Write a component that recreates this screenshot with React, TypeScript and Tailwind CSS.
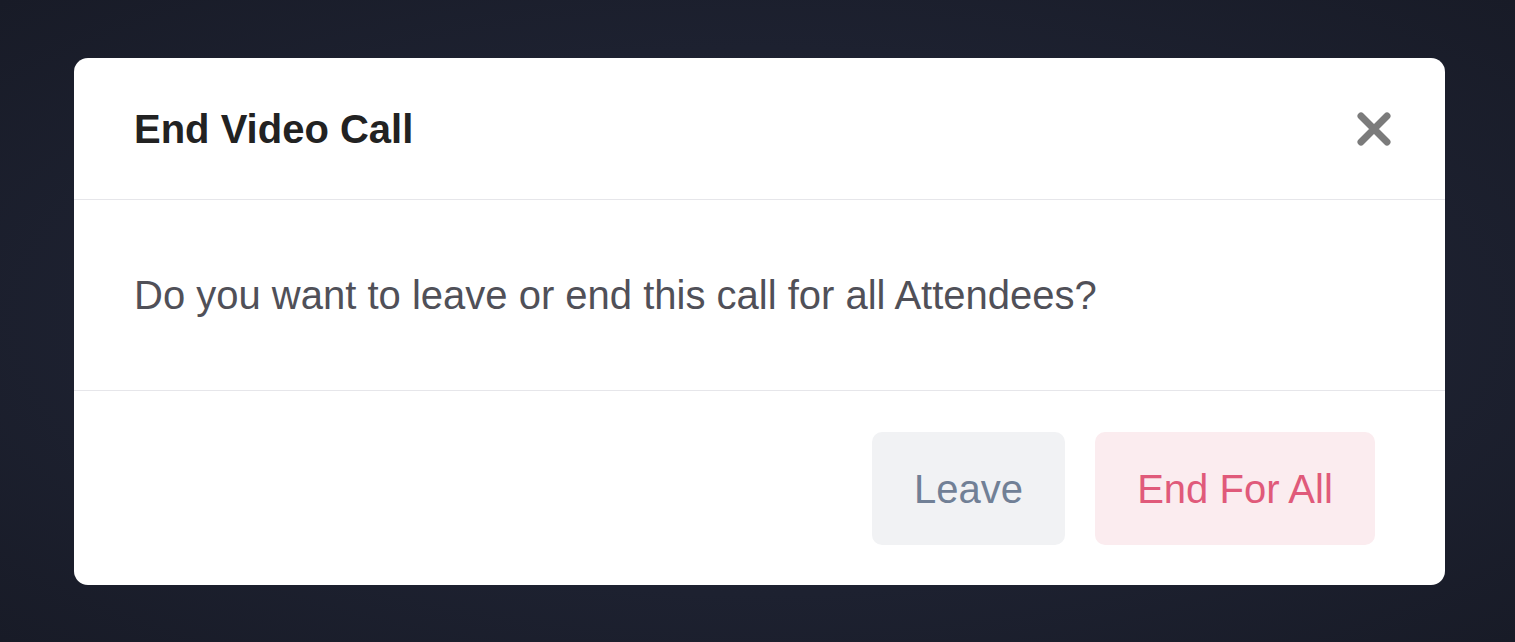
export default function App() {
  return (
    <div
      className="h-[642px] w-full overflow-hidden bg-[radial-gradient(ellipse_at_center,#262b3c_0%,#1d2130_60%,#181b27_100%)] pl-[74px] pt-[58px]"
      style={{ fontFamily: '"Liberation Sans", Arial, sans-serif' }}
    >
      <div className="w-[1371px] rounded-[14px] bg-white">
        <div className="flex h-[142px] items-center justify-between border-b border-[#e6e6ea] pl-[60px] pr-[54px]">
          <h2 className="text-[40px] font-bold text-[#222222]">End Video Call</h2>
          <button className="flex h-[34px] w-[34px] items-center justify-center">
            <svg width="34" height="34" viewBox="0 0 34 34">
              <path
                d="M4 4 L30 30 M30 4 L4 30"
                stroke="#7b7b7b"
                strokeWidth="7"
                strokeLinecap="round"
              />
            </svg>
          </button>
        </div>

        <div className="flex h-[191px] items-center border-b border-[#e6e6ea] pl-[60px]">
          <p className="text-[40px] text-[#505058]">
            Do you want to leave or end this call for all Attendees?
          </p>
        </div>

        <div className="flex justify-end gap-[30px] pb-[40px] pr-[70px] pt-[41px]">
          <button className="flex h-[113px] w-[193px] items-center justify-center rounded-[10px] bg-[#f1f2f4] text-[40px] text-[#718096]">
            Leave
          </button>
          <button className="flex h-[113px] w-[280px] items-center justify-center rounded-[10px] bg-[#fbecef] text-[40px] text-[#e05a7a]">
            End For All
          </button>
        </div>
      </div>
    </div>
  )
}
